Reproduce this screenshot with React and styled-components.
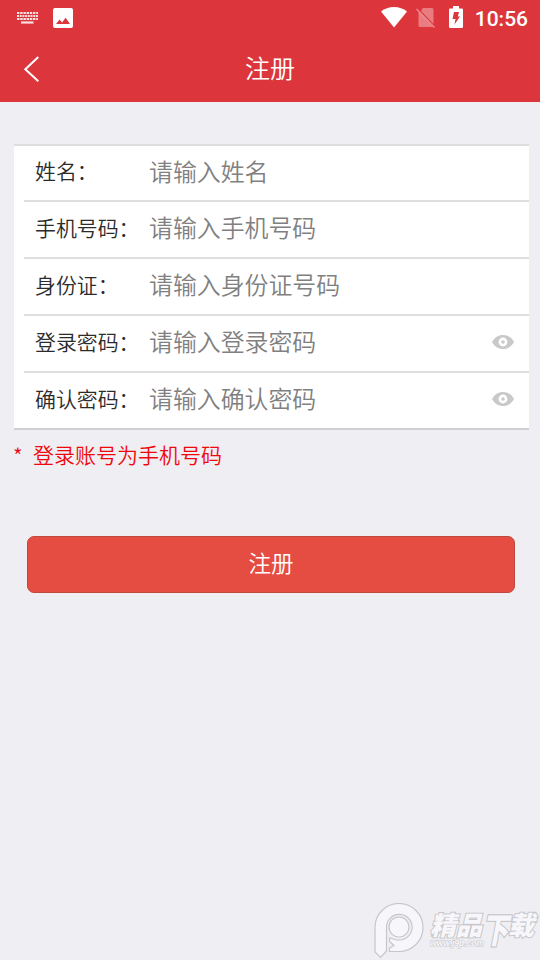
import { useState } from "react";
import styled, { createGlobalStyle } from "styled-components";

const fields = [
  { name: "name", label: "姓名：", placeholder: "请输入姓名" },
  { name: "phone", label: "手机号码：", placeholder: "请输入手机号码" },
  { name: "idCard", label: "身份证：", placeholder: "请输入身份证号码" },
  { name: "password", label: "登录密码：", placeholder: "请输入登录密码", secret: true },
  { name: "confirm", label: "确认密码：", placeholder: "请输入确认密码", secret: true },
];

const KeyboardIcon = () => (
  <svg width="21" height="12" viewBox="0 0 21 12" fill="none" stroke="#fff" strokeOpacity="0.85">
    <path d="M0 1h21" strokeWidth="2" strokeDasharray="2.4 0.8" />
    <path d="M0 4h21" strokeWidth="2" strokeDasharray="2 0.7" />
    <path d="M0 7h21" strokeWidth="2" strokeDasharray="2.5 0.7" />
    <path d="M4 10.5h12.5" strokeWidth="2.2" />
  </svg>
);

const PictureIcon = () => (
  <svg width="20" height="20" viewBox="0 0 20 20">
    <rect width="20" height="20" rx="2" fill="#fff" />
    <path d="M3 16l3.5-4.6 2.6 3 3.5-4.7L17 16z" fill="#dc363c" />
  </svg>
);

const WifiIcon = () => (
  <svg width="26" height="21" viewBox="0 0 26 21">
    <path d="M0 4.6C3.6 1.6 8 0 13 0s9.4 1.6 13 4.6L13 20.5z" fill="#fff" />
  </svg>
);

const NoSimIcon = () => (
  <svg width="20" height="21" viewBox="0 0 20 21">
    <path d="M7 1h9q1.5 0 1.5 1.5V17L5 4zM2.5 4.5L17 20H4q-1.5 0-1.5-1.5z" fill="#fff" opacity="0.35" />
    <path d="M0.5 2L18.5 20.5" stroke="#fff" strokeOpacity="0.4" strokeWidth="1.5" />
  </svg>
);

const BatteryIcon = () => (
  <svg width="14" height="22" viewBox="0 0 14 22">
    <path d="M4 0h6v2.5h2.8q1.2 0 1.2 1.2v17q0 1.3-1.2 1.3H1.2Q0 22 0 20.7v-17q0-1.2 1.2-1.2H4z" fill="#fff" />
    <path d="M5 6h5l-1.2 4.500H11L5.500 18.500l1-5.500H3.500z" fill="#dc363c" />
  </svg>
);

const BackIcon = () => (
  <svg width="17" height="28" viewBox="0 0 17 28">
    <path d="M15.300 2L2.300 14.300l13 12" fill="none" stroke="#fff" strokeWidth="2" />
  </svg>
);

const EyeIcon = () => (
  <svg width="22" height="14" viewBox="0 0 22 14">
    <path d="M0 7C2.500 2.500 6.300 0 11 0s8.500 2.500 11 7c-2.500 4.500-6.300 7-11 7S2.500 11.500 0 7z" fill="#c9c9c9" />
    <circle cx="11" cy="7" r="4.400" fill="#fff" />
    <circle cx="11" cy="7" r="1.800" fill="#c9c9c9" />
  </svg>
);

const MarkLogo = () => (
  <svg width="50" height="56" viewBox="0 0 50 56" fill="#f7f7fb" stroke="#c6c6cb" strokeWidth="1.200">
    <path d="M1 24.500a24 24 0 1 1 24 24H15.500v-3.500l4.500-2.500-4.500-4V35l7 2h3A12.800 12.800 0 1 0 12.500 24.500V48l-6 6.500L1 49z" />
    <circle cx="25" cy="24" r="10" />
  </svg>
);

const App = () => {
  const [values, setValues] = useState({});
  const [shown, setShown] = useState({});

  const handleChange = (e) => setValues({ ...values, [e.target.name]: e.target.value });

  return (
    <Page lang="zh-CN">
      <GlobalStyle />
      <StatusBar>
        <Notices>
          <KeyboardIcon />
          <PictureIcon />
        </Notices>
        <Indicators>
          <WifiIcon />
          <NoSimIcon />
          <BatteryIcon />
          <Clock>10:56</Clock>
        </Indicators>
      </StatusBar>

      <NavBar>
        <BackButton aria-label="返回">
          <BackIcon />
        </BackButton>
        <Title>注册</Title>
      </NavBar>

      <Form onSubmit={(e) => e.preventDefault()}>
        <FieldList>
          {fields.map(({ name, label, placeholder, secret }) => (
            <Row key={name}>
              <Label htmlFor={name}>{label}</Label>
              <Input
                id={name}
                name={name}
                type={secret && !shown[name] ? "password" : "text"}
                placeholder={placeholder}
                value={values[name] || ""}
                onChange={handleChange}
              />
              {secret && (
                <EyeButton
                  type="button"
                  aria-label="显示密码"
                  onClick={() => setShown({ ...shown, [name]: !shown[name] })}
                >
                  <EyeIcon />
                </EyeButton>
              )}
            </Row>
          ))}
        </FieldList>
        <Note>
          <Star>*</Star>登录账号为手机号码
        </Note>
        <SubmitButton type="submit">注册</SubmitButton>
      </Form>

      <Watermark>
        <MarkLogo />
        <MarkText>
          <MarkName>
            精品<MarkTall>下</MarkTall>载
          </MarkName>
          <MarkSite>www.j9p.com</MarkSite>
        </MarkText>
      </Watermark>
    </Page>
  );
};

export default App;

const GlobalStyle = createGlobalStyle`
  * {
    box-sizing: border-box;
  }

  body {
    margin: 0;
    background: #efeef3;
  }

  button, input {
    font-family: inherit;
    font-weight: inherit;
    border: 0;
    padding: 0;
    background: none;
  }

  svg {
    display: block;
    flex: none;
  }
`;

const Page = styled.div`
  position: relative;
  height: 960px;
  overflow: hidden;
  background: #efeef3;
  font-family: "Noto Sans CJK SC", sans-serif;
  font-weight: 350;
`;

const StatusBar = styled.div`
  display: flex;
  justify-content: space-between;
  align-items: center;
  height: 36px;
  padding: 0 12px 0 17px;
  background: #dc363c;
`;

const Notices = styled.div`
  display: flex;
  align-items: center;
  gap: 15px;
`;

const Indicators = styled.div`
  display: flex;
  align-items: center;
  gap: 9px;
  height: 34px;
  padding-bottom: 2px;

  svg:nth-child(3) {
    margin-left: 4px;
  }
`;

const Clock = styled.span`
  margin: 4px 0 0 3px;
  color: #fff;
  font: 500 21px/34px Roboto, sans-serif;
`;

const NavBar = styled.header`
  display: grid;
  grid-template-columns: 60px 1fr 60px;
  align-items: center;
  height: 66px;
  background: #dc363c;
`;

const BackButton = styled.button`
  padding-left: 23px;
`;

const Title = styled.h1`
  margin: 0;
  padding-bottom: 4px;
  color: #fff;
  font-size: 25px;
  font-weight: inherit;
  line-height: 36px;
  text-align: center;
`;

const Form = styled.form`
  display: flex;
  flex-direction: column;
  padding: 42px 11px 0 14px;
`;

const FieldList = styled.div`
  padding-left: 10px;
  background: #fff;
  border-top: 2px solid #dddde0;
  border-bottom: 2px solid #cfcfd3;
`;

const Row = styled.div`
  display: flex;
  align-items: center;
  height: 57px;
  padding: 0 15px 5px 11px;

  &:not(:last-child) {
    border-bottom: 2px solid #dedede;
  }

  &:first-child {
    height: 56px;
    padding-bottom: 5px;
  }

  &:last-child {
    height: 55px;
  }
`;

const Label = styled.label`
  width: 114px;
  padding-bottom: 1px;
  color: #2b2b2b;
  font-size: 20.9px;
  white-space: nowrap;
`;

const Input = styled.input`
  flex: 1;
  min-width: 0;
  height: 40px;
  padding-bottom: 1px;
  color: #222;
  font-size: 23.9px;
  outline: none;

  &::placeholder {
    color: #808080;
    opacity: 1;
  }
`;

const EyeButton = styled.button`
  padding-top: 1px;
`;

const Note = styled.p`
  display: flex;
  margin: 8px 0 0;
  color: #ee080c;
  font-size: 21px;
  line-height: 32px;
`;

const Star = styled.span`
  width: 20px;
  margin-left: -1px;
  padding-top: 1px;
`;

const SubmitButton = styled.button`
  height: 57px;
  margin: 65px 14px 0 13px;
  padding-bottom: 6px;
  border: 1px solid #c1483f;
  border-radius: 7px;
  background: #e64d42;
  color: #fff;
  font-size: 22.5px;
`;

const Watermark = styled.div`
  position: absolute;
  right: 4px;
  bottom: 1px;
  display: flex;
  gap: 6px;
`;

const MarkText = styled.div`
  width: 106px;
  color: #f7f7fb;
  font-style: italic;
  font-weight: 900;
  white-space: nowrap;
  -webkit-text-stroke: 2px #c6c6cb;
  paint-order: stroke fill;
`;

const MarkName = styled.div`
  margin-top: 6px;
  font-size: 26px;
  line-height: 29px;
`;

const MarkTall = styled.span`
  display: inline-block;
  transform: scaleY(1.35) translateY(3px);
`;

const MarkSite = styled.div`
  width: 50px;
  font: italic 700 8.5px/10px "Liberation Sans", sans-serif;
  -webkit-text-stroke-width: 1px;
`;
